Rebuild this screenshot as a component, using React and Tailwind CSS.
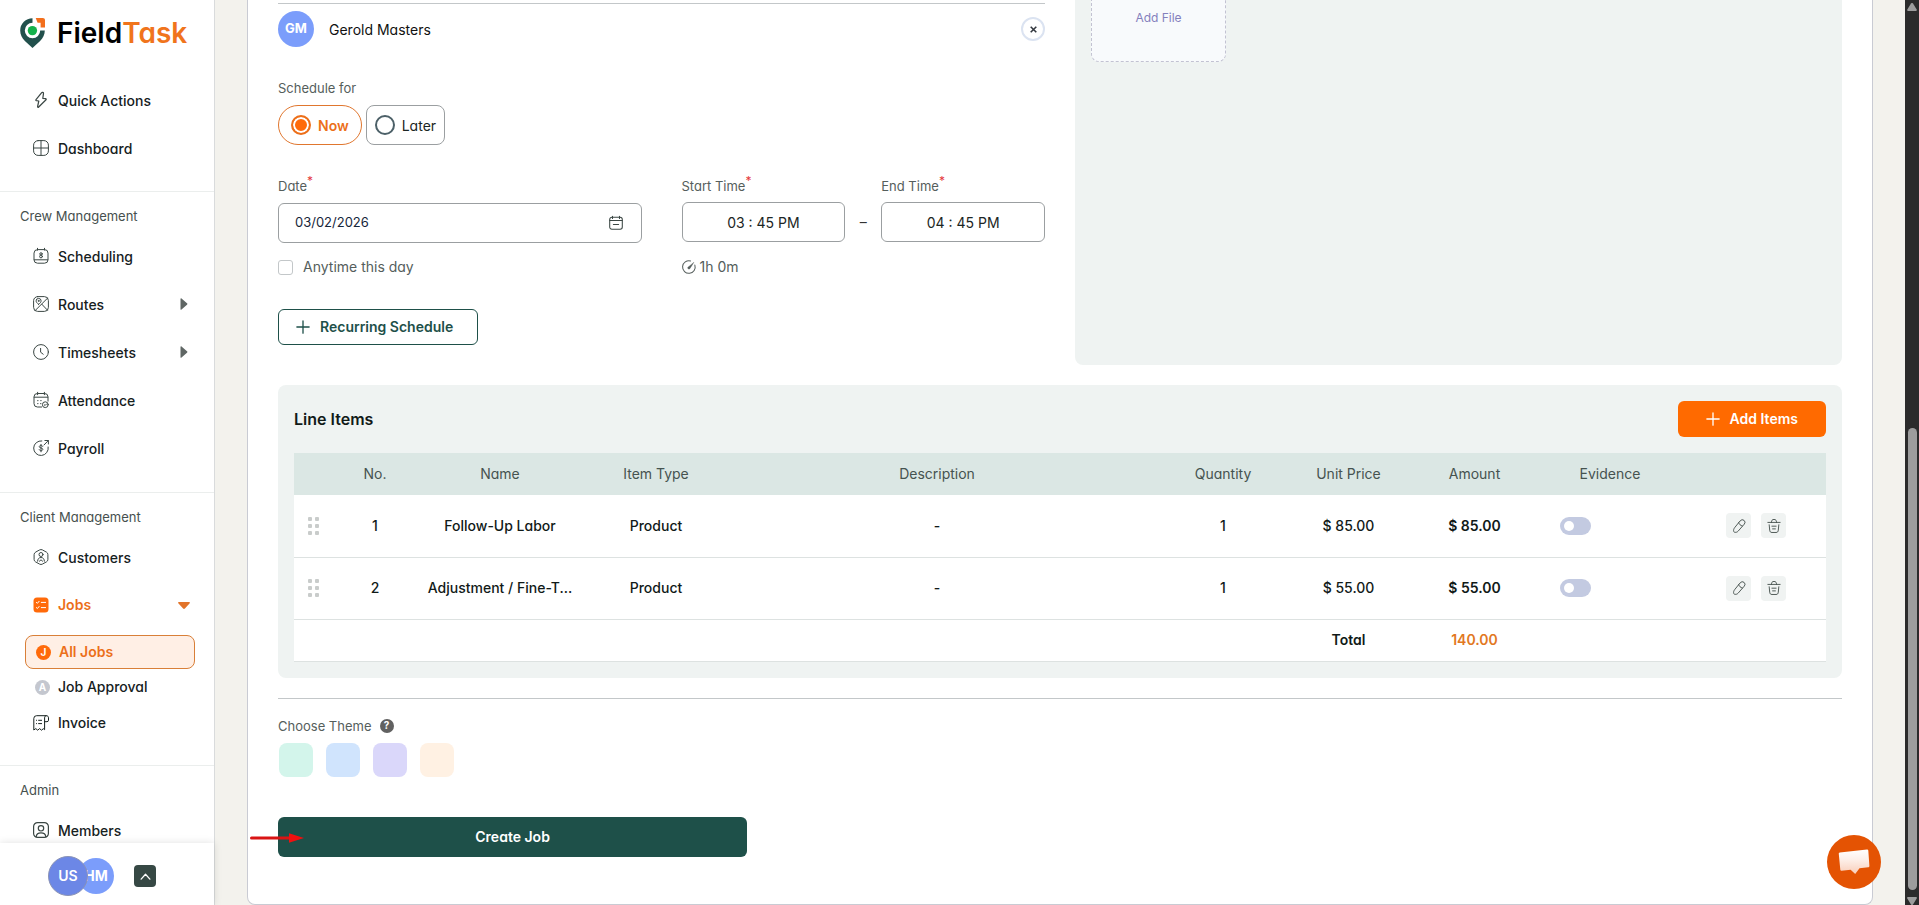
import React, { useState } from 'react';

const stroke = {
  fill: 'none',
  stroke: 'currentColor',
  strokeWidth: 1,
  strokeLinecap: 'round',
  strokeLinejoin: 'round',
};

function Icon({ children, className = 'size-4' }) {
  return (
    <svg viewBox="0 0 16 16" className={`${className} shrink-0 overflow-visible`} aria-hidden="true" {...stroke}>
      {children}
    </svg>
  );
}

const BoltIcon = () => (
  <Icon>
    <path d="M8.500.800 3 7.600c-.4.500-.2 1 .4 1.100l2.400.3-1.200 5.500c-.1.900.5 1.100 1.100.5L13 7.800c.4-.5.2-1-.4-1.100l-2.800-.3.700-5c.1-1-1.300-1.500-2-.6Z" strokeWidth="1.200" />
  </Icon>
);

const DashboardIcon = () => (
  <Icon>
    <rect x=".6" y=".6" width="14.800" height="14.800" rx="4.500" />
    <path d="M8 .6v14.800M.6 8h14.800" />
  </Icon>
);

const ScheduleIcon = () => (
  <Icon>
    <rect x="1" y="1.600" width="14" height="13.600" rx="3.500" />
    <path d="M4.500.3v1.800M11.500.3v1.800M1.200 11.800h13.600" />
    <circle cx="8" cy="5.900" r="1.200" />
    <circle cx="8" cy="8.500" r="1.400" />
  </Icon>
);

const RoutesIcon = () => (
  <Icon>
    <rect x=".6" y=".6" width="14.800" height="14.800" rx="4" />
    <path d="M14.500 2.200 2.200 14.500M8.800 8.200l5.600 5.900" />
    <path d="M5.600 8.300C4 7.100 3.100 6.100 3.100 4.900a2.500 2.500 0 0 1 5 0c0 1.200-.9 2.200-2.500 3.400Z" />
    <circle cx="5.600" cy="4.900" r=".5" />
  </Icon>
);

const ClockIcon = () => (
  <Icon>
    <circle cx="8" cy="8" r="7.400" />
    <path d="M7.600 4.400v3.800l2.600 2" />
  </Icon>
);

const AttendanceIcon = () => (
  <Icon>
    <path d="M8.600 15H4.400A3.400 3.400 0 0 1 1 11.600V4.900a3.400 3.400 0 0 1 3.400-3.400h7.200A3.400 3.400 0 0 1 15 4.900v4.200M4.600.3v2.400M11.400.3v2.400M1.200 5.200h13.600" />
    <path d="M4.800 8.600h.1M7.900 8.600H8M4.800 11.600h.1M7.700 11.600h.1" strokeWidth="1.300" />
    <circle cx="12.300" cy="12.700" r="2.900" />
    <path d="m11.200 12.700.9.800 1.400-1.500" />
  </Icon>
);

const PayrollIcon = () => (
  <Icon>
    <path d="M8.800.9A7.300 7.300 0 1 0 15.200 7M11 5l4.300-4.400M11.900.5h3.500V4" />
    <path d="M9.700 6.300C9.500 5.700 8.800 5.400 8 5.400c-1 0-1.700.5-1.700 1.300C6.300 8.500 9.800 7.500 9.800 9.300c0 .8-.8 1.400-1.800 1.400-.9 0-1.600-.4-1.800-1.100M8 4.400v7.400" />
  </Icon>
);

const CustomersIcon = () => (
  <Icon>
    <path d="M6.600.9a2.800 2.800 0 0 1 2.800 0l4 2.200a2.800 2.800 0 0 1 1.500 2.500v4.800a2.800 2.800 0 0 1-1.500 2.500l-4 2.200a2.800 2.800 0 0 1-2.800 0l-4-2.200a2.800 2.800 0 0 1-1.500-2.500V5.600a2.800 2.800 0 0 1 1.500-2.500Z" />
    <circle cx="8" cy="5.500" r="2" />
    <path d="M4.600 12.200c0-2.300 1.400-3.700 3.400-3.700s3.400 1.400 3.400 3.700M6.400 12.200l1.600-1.400 1.600 1.400" />
  </Icon>
);

const JobsIcon = () => (
  <Icon>
    <rect x=".5" y=".5" width="15" height="15" rx="3.500" fill="#ff6a0a" stroke="none" />
    <path d="m3.400 5.400 1 .9 1.700-2M3.400 10.600l1 .9 1.700-2M8.300 5.400h4.300M8.300 10.600h4.300" stroke="#fff" />
  </Icon>
);

const InvoiceIcon = () => (
  <Icon>
    <path d="M13.200.7H3.600A2.800 2.800 0 0 0 .8 3.500V15l2-1.400 1.900 1.600 1.900-1.600 1.900 1.600 1.800-1.500 1.300 1V2.800c0-1.300.7-2.100 1.900-2.100 1.200 0 2 .9 2 2.100v2.400c0 1-.6 1.500-1.500 1.500h-2.400" />
    <path d="M3.400 5.300h.1M5.600 5.300h3M3.400 8.600h.1M5.600 8.600h3" />
  </Icon>
);

const MembersIcon = () => (
  <Icon>
    <rect x=".6" y=".6" width="14.800" height="14.800" rx="4" strokeWidth="1.200" />
    <circle cx="8" cy="6.300" r="2.700" strokeWidth="1.200" />
    <path d="M3.300 14.500c.2-2.400 2.100-3.600 4.700-3.600s4.500 1.200 4.700 3.600" strokeWidth="1.200" />
  </Icon>
);

const CalendarIcon = () => (
  <Icon className="size-[14px]">
    <rect x=".8" y="1.500" width="14.400" height="13.700" rx="2.500" strokeWidth="1.200" />
    <path d="M4 .2v2.600M12 .2v2.600M.9 5.200h14.200M5 9.700h6" strokeWidth="1.200" />
  </Icon>
);

const DurationIcon = () => (
  <Icon className="size-[14px]">
    <path d="M9.800 1.100a7.200 7.200 0 1 0 4.900 4.700" strokeWidth="1.200" />
    <path d="m13.300 3-4 6.300a1.400 1.400 0 1 1-1.800-1.700Z" fill="currentColor" strokeWidth=".5" />
  </Icon>
);

const PencilIcon = () => (
  <Icon className="size-[14px]">
    <path d="M9.500 1.900a3 3 0 0 1 4.600 3.900L7 13.900c-1 1.100-2.300 1.500-3.700 1.300-1.200-.2-1.600-1-1.500-2.100.1-1.300.4-2.200 1.300-3.300Z" />
    <path d="M7.700 4.200c.6 2 1.900 3.200 4 3.700" />
  </Icon>
);

const TrashIcon = () => (
  <Icon className="size-[14px]">
    <path d="M1 3.900h14M5.100 3.700c0-2 .7-3.200 2.900-3.200s2.900 1.200 2.900 3.200M2.500 6.600l.6 6.200c.2 1.800.9 2.600 2.600 2.600h4.600c1.700 0 2.400-.8 2.600-2.600l.6-6.200M5.600 8.200h4.800M6.400 11.300h3.200" />
  </Icon>
);

const PlusIcon = () => (
  <Icon className="size-[14px]">
    <path d="M8 1v14M1 8h14" strokeWidth="1.500" />
  </Icon>
);

const CREW_ITEMS = [
  { label: 'Scheduling', icon: <ScheduleIcon /> },
  { label: 'Routes', icon: <RoutesIcon />, arrow: true },
  { label: 'Timesheets', icon: <ClockIcon />, arrow: true },
  { label: 'Attendance', icon: <AttendanceIcon /> },
  { label: 'Payroll', icon: <PayrollIcon /> },
];

const LINE_ITEMS = [
  { no: 1, name: 'Follow-Up Labor', type: 'Product', qty: 1, price: '$ 85.00' },
  { no: 2, name: 'Adjustment / Fine-T...', type: 'Product', qty: 1, price: '$ 55.00' },
];

const THEMES = [
  { name: 'Green', color: 'bg-[#d3f5eb]' },
  { name: 'Blue', color: 'bg-[#d0e4fd]' },
  { name: 'Purple', color: 'bg-[#dad7fa]' },
  { name: 'Peach', color: 'bg-[#fff1e3]' },
];

function NavItem({ label, icon, arrow }) {
  return (
    <a href="#" className="flex h-12 items-center gap-[9px] pl-[33px] pr-[26px] text-sm font-medium text-[#16211e]">
      <span className="text-[#3b4744]">{icon}</span>
      <span className="flex-1 pt-0.5">{label}</span>
      {arrow && (
        <svg viewBox="0 0 8 12" className="h-3 w-2" fill="#5f6664" aria-hidden="true">
          <path d="M.5.8v10.400c0 .6.600.8 1 .4L7 6.700c.5-.4.5-1 0-1.400L1.500.4C1.100 0 .5.200.5.800Z" />
        </svg>
      )}
    </a>
  );
}

function SectionTitle({ children }) {
  return <h2 className="mb-1.5 pl-5 text-[13px] leading-5 text-[#46504e]">{children}</h2>;
}

function Logo() {
  return (
    <a href="#" className="flex items-center gap-3 pl-5 pt-[15px]">
      <svg viewBox="0 0 25 30" className="h-[30px] w-[25px]" aria-hidden="true">
        <path
          d="M12.500.2A12.300 12.300 0 0 0 .2 12.500c0 4.200 1.900 7.700 4.700 10.500l7.600 7 7.600-7c2.800-2.800 4.700-6.200 4.700-10.500h-4.600a7.700 7.700 0 1 1-7.700-7.700Z"
          fill="#22504c"
        />
        <path d="M15.700 0h7.100c1.300 0 2.200.9 2.200 2.200v7.300h-4.400V4.700h-3Z" fill="#f36f1c" />
        <circle cx="12.400" cy="12.600" r="4.700" fill="#14b14b" />
      </svg>
      <span className="text-[28px] font-semibold leading-9 text-black">
        Field<span className="text-[#f0741c]">Task</span>
      </span>
    </a>
  );
}

function Sidebar() {
  return (
    <aside className="flex w-[215px] shrink-0 flex-col border-r border-[#d9dbdc] bg-white">
      <nav className="min-h-0 flex-1 overflow-hidden">
        <div className="h-[76px]">
          <Logo />
        </div>
        <div className="border-b border-[#ebeeed] pb-[19px]">
          <NavItem label="Quick Actions" icon={<BoltIcon />} />
          <NavItem label="Dashboard" icon={<DashboardIcon />} />
        </div>

        <div className="border-b border-[#ebeeed] pb-5 pt-[14px]">
          <SectionTitle>Crew Management</SectionTitle>
          {CREW_ITEMS.map(item => <NavItem key={item.label} {...item} />)}
        </div>

        <div className="border-b border-[#ebeeed] pb-6 pt-[14px]">
          <SectionTitle>Client Management</SectionTitle>
          <NavItem label="Customers" icon={<CustomersIcon />} />
          <a href="#" className="flex h-12 items-center gap-[9px] pl-[33px] pr-6 text-sm font-semibold text-[#ec6f1a]">
            <JobsIcon />
            <span className="flex-1">Jobs</span>
            <svg viewBox="0 0 12 7" className="h-[7px] w-3" fill="#e2742a" aria-hidden="true">
              <path d="M.9 0h10.200c.8 0 1.100.8.600 1.300L6.900 6.500c-.5.600-1.300.6-1.800 0L.3 1.300C-.2.800.1 0 .9 0Z" />
            </svg>
          </a>
          <a
            href="#"
            className="ml-[25px] mr-[19px] mt-1.5 flex h-[34px] items-center gap-2 rounded-lg border border-[#d97f38] bg-[#ffefe5] pl-2.5 text-sm font-semibold text-[#ec6f1a]"
          >
            <span className="flex size-[15px] items-center justify-center rounded-full bg-[#ff6a0a] text-[10px] font-bold text-white">J</span>
            All Jobs
          </a>
          <a href="#" className="flex h-9 items-center gap-2 pl-[35px] text-sm font-medium text-[#16211e]">
            <span className="flex size-[15px] items-center justify-center rounded-full bg-[#c4c7cf] text-[10px] font-bold text-white">A</span>
            Job Approval
          </a>
          <a href="#" className="flex h-9 items-center gap-[9px] pl-[33px] text-sm font-medium text-[#16211e]">
            <InvoiceIcon />
            Invoice
          </a>
        </div>

        <div className="pt-[14px]">
          <SectionTitle>Admin</SectionTitle>
          <NavItem label="Members" icon={<MembersIcon />} />
        </div>
      </nav>

      <div className="z-10 flex h-[62px] items-center bg-white pl-12 pt-1 shadow-[0_0_8px_rgba(0,0,0,0.12)]">
        <span className="z-10 flex size-10 items-center justify-center rounded-full border border-[#8b93b5] bg-[#6c87e6] text-sm font-semibold text-white">US</span>
        <span className="-ml-2.5 flex size-9 items-center justify-center rounded-full bg-[#7b9dfb] text-sm font-bold text-white">HM</span>
        <button type="button" aria-label="Expand" className="ml-5 flex size-[22px] items-center justify-center rounded bg-[#364844] text-white">
          <svg viewBox="0 0 12 8" className="h-[7px] w-[11px]" {...stroke} strokeWidth="1.500" aria-hidden="true">
            <path d="m1 7 5-5.500L11 7" />
          </svg>
        </button>
      </div>
    </aside>
  );
}

function Label({ children, required, htmlFor }) {
  return (
    <label htmlFor={htmlFor} className="block h-5 text-[13px] leading-5 text-[#555e5c]">
      {children}
      {required && <sup className="text-xs text-[#e5383b]">*</sup>}
    </label>
  );
}

function ScheduleForm() {
  const [when, setWhen] = useState('now');

  return (
    <div className="pt-[3px]">
      <div className="flex items-center border-t border-[#c3c7c9] pt-[7px]">
        <span className="flex size-9 items-center justify-center rounded-full bg-[#7b9dfb] text-[13px] font-bold text-white">GM</span>
        <span className="ml-[15px] flex-1 pt-0.5 text-sm text-[#111]">Gerold Masters</span>
        <button type="button" aria-label="Remove" className="flex size-6 items-center justify-center rounded-full border-2 border-[#dbe3f1] text-[#33383f]">
          <svg viewBox="0 0 8 8" className="size-[7px]" stroke="currentColor" strokeWidth="1.800" aria-hidden="true">
            <path d="m.8.8 6.400 6.400M7.200.8.800 7.200" />
          </svg>
        </button>
      </div>

      <fieldset className="mt-[31px]">
        <legend className="text-[13px] leading-5 text-[#555e5c]">Schedule for</legend>
        <div className="mt-[7px] flex gap-1">
          <label className="flex h-10 items-center gap-[7px] rounded-full border border-[#e0762e] px-3 text-sm font-semibold text-[#ec6f1a]">
            <input
              type="radio"
              name="when"
              checked={when === 'now'}
              onChange={() => setWhen('now')}
              className="size-5 appearance-none rounded-full border-2 border-[#4c6068] checked:border-[#ec6f1a] checked:bg-[#ff6a0a] checked:shadow-[inset_0_0_0_2px_#fff]"
            />
            <span className="pt-0.5">Now</span>
          </label>
          <label className="flex h-10 items-center gap-[7px] rounded-lg border border-[#9b9fa1] px-2 text-sm text-[#1c2624]">
            <input
              type="radio"
              name="when"
              checked={when === 'later'}
              onChange={() => setWhen('later')}
              className="size-5 appearance-none rounded-full border-2 border-[#4c6068] checked:border-[#ec6f1a] checked:bg-[#ff6a0a] checked:shadow-[inset_0_0_0_2px_#fff]"
            />
            <span className="pt-0.5">Later</span>
          </label>
        </div>
      </fieldset>

      <div className="mt-[31px] grid grid-cols-2 gap-10">
        <div>
          <Label htmlFor="date" required>Date</Label>
          <div className="mt-[7px] flex h-10 items-center rounded-md border border-[#9b9fa1] pl-4 pr-[18px] text-[#3b4744]">
            <input id="date" type="text" defaultValue="03/02/2026" className="min-w-0 flex-1 text-[13px] text-[#16263a] outline-none" />
            <CalendarIcon />
          </div>
          <label className="mt-[14px] flex items-center gap-2.5 text-sm leading-5 text-[#555e5c]">
            <input type="checkbox" className="size-[15px] appearance-none rounded-[3px] border border-[#c3c7c9]" />
            Anytime this day
          </label>
        </div>
        <div>
          <div className="flex">
            <div className="min-w-0 flex-1">
              <Label htmlFor="start" required>Start Time</Label>
              <input id="start" type="text" defaultValue="03 : 45 PM" className="mt-1.5 h-10 w-full rounded-md border border-[#9b9fa1] text-center text-sm text-[#1c2624]" />
            </div>
            <span className="flex w-9 items-end justify-center pb-2.5 text-sm leading-5 text-[#333]">–</span>
            <div className="min-w-0 flex-1">
              <Label htmlFor="end" required>End Time</Label>
              <input id="end" type="text" defaultValue="04 : 45 PM" className="mt-1.5 h-10 w-full rounded-md border border-[#9b9fa1] text-center text-sm text-[#1c2624]" />
            </div>
          </div>
          <p className="mt-[15px] flex items-center gap-1 text-sm leading-5 text-[#555e5c]">
            <DurationIcon />
            1h 0m
          </p>
        </div>
      </div>

      <button type="button" className="mt-8 flex h-9 items-center gap-2.5 rounded-md border border-[#1e5049] pl-[17px] pr-6 text-sm font-semibold text-[#1e5049]">
        <PlusIcon />
        Recurring Schedule
      </button>
    </div>
  );
}

function LineItems() {
  return (
    <section className="mt-5 rounded-lg bg-[#eff3f2] p-4">
      <div className="mb-4 flex h-9 items-center justify-between">
        <h2 className="text-base font-semibold text-[#111a18]">Line Items</h2>
        <button type="button" className="flex h-9 items-center gap-2.5 rounded-md bg-[#ff6a00] px-7 text-sm font-semibold text-white">
          <PlusIcon />
          Add Items
        </button>
      </div>
      <table className="w-full table-fixed bg-white text-center text-sm text-[#111a18]">
        <colgroup>
          <col className="w-10" />
          <col className="w-[82px]" />
          <col className="w-[168px]" />
          <col className="w-[144px]" />
          <col />
          <col className="w-[154px]" />
          <col className="w-[97px]" />
          <col className="w-[155px]" />
          <col className="w-[116px]" />
          <col className="w-[158px]" />
        </colgroup>
        <thead>
          <tr className="h-[42px] bg-[#dbe7e4] text-[#465350]">
            <th></th>
            <th className="font-normal">No.</th>
            <th className="font-normal">Name</th>
            <th className="font-normal">Item Type</th>
            <th className="font-normal">Description</th>
            <th className="font-normal">Quantity</th>
            <th className="font-normal">Unit Price</th>
            <th className="font-normal">Amount</th>
            <th className="font-normal">Evidence</th>
            <th></th>
          </tr>
        </thead>
        <tbody>
          {LINE_ITEMS.map(item => (
            <tr key={item.no} className="h-[62px] border-b border-[#dde2e1] font-medium">
              <td className="pl-[14px]">
                <svg viewBox="0 0 11 18" className="h-[18px] w-[11px]" fill="#c9cccb" aria-hidden="true">
                  {[0, 7, 14].map(y => (
                    <g key={y}>
                      <rect x="0" y={y} width="4" height="4" rx="1" />
                      <rect x="7" y={y} width="4" height="4" rx="1" />
                    </g>
                  ))}
                </svg>
              </td>
              <td>{item.no}</td>
              <td className="whitespace-nowrap">{item.name}</td>
              <td>{item.type}</td>
              <td>-</td>
              <td>{item.qty}</td>
              <td>{item.price}</td>
              <td className="font-semibold">{item.price}</td>
              <td className="pl-2">
                <button type="button" role="switch" aria-checked="false" aria-label={`Evidence ${item.no}`} className="flex h-[18px] w-[31px] items-center rounded-full bg-[#c3cae1] pl-1">
                  <span className="size-2.5 rounded-full bg-white" />
                </button>
              </td>
              <td className="pl-[58px]">
                <div className="flex gap-2.5">
                  <button type="button" aria-label="Edit" className="flex size-[25px] items-center justify-center rounded bg-[#f0f3f2] text-[#3b4744]">
                    <PencilIcon />
                  </button>
                  <button type="button" aria-label="Delete" className="flex size-[25px] items-center justify-center rounded bg-[#f0f3f2] text-[#3b4744]">
                    <TrashIcon />
                  </button>
                </div>
              </td>
            </tr>
          ))}
        </tbody>
        <tfoot>
          <tr className="h-[42px] border-b border-[#dde2e1] font-semibold">
            <td colSpan={6}></td>
            <td>Total</td>
            <td className="text-[#e2781f]">140.00</td>
            <td colSpan={2}></td>
          </tr>
        </tfoot>
      </table>
    </section>
  );
}

export default function App() {
  return (
    <div className="flex h-screen overflow-hidden bg-[#f3f2ed] font-[Inter,'Liberation_Sans',sans-serif] [font-feature-settings:'cv11']">
      <Sidebar />

      <main className="min-w-0 flex-1 px-8">
        <div className="h-full rounded-b-lg border-x border-b border-[#c9cbd3] bg-white px-[30px]">
          <div className="grid grid-cols-2 gap-[30px]">
            <ScheduleForm />
            <div className="min-h-[365px] rounded-b-lg bg-[#eff3f2] px-4">
              <button type="button" className="flex h-[62px] w-[135px] items-start justify-center rounded-b-lg border border-t-0 border-dashed border-[#c2c2d2] bg-[#f8fafc] pt-2.5 text-xs text-[#8480bd]">
                Add File
              </button>
            </div>
          </div>

          <LineItems />

          <div className="mt-5 border-t border-[#c3c7c9] pt-[17px]">
            <div className="flex items-center gap-2">
              <span className="text-[13px] leading-5 text-[#555e5c]">Choose Theme</span>
              <span className="flex size-[14px] items-center justify-center rounded-full bg-[#616161] text-[10px] font-bold text-white">?</span>
            </div>
            <div className="mt-[7px] flex gap-[13px] pl-px">
              {THEMES.map(t => (
                <button key={t.name} type="button" aria-label={t.name} className={`size-[34px] rounded-lg ${t.color}`} />
              ))}
            </div>
          </div>

          <div className="relative mt-10">
            <button type="button" className="h-10 w-[30%] rounded-md bg-[#1e5049] text-sm font-semibold text-white">
              Create Job
            </button>
            <svg viewBox="0 0 54 12" className="absolute -left-7 top-[15px] h-3 w-[54px]" aria-hidden="true">
              <path d="M1.500 6h42" stroke="#d91414" strokeWidth="3" strokeLinecap="round" />
              <path d="M39 1.200 54 6l-15 4.800Z" fill="#f01010" />
            </svg>
          </div>
        </div>
      </main>

      {/* scroll rail */}
      <div className="flex w-[14px] shrink-0 flex-col items-center bg-[#2b2b2b]">
        <svg viewBox="0 0 10 8" className="mt-[3px] h-2 w-2.5" fill="#9d9d9d" aria-hidden="true">
          <path d="M4 .6.300 6.500c-.4.700 0 1.500.8 1.500h7.800c.8 0 1.200-.8.8-1.500L6 .600a1.200 1.200 0 0 0-2 0Z" />
        </svg>
        <div className="min-h-0 flex-1" />
        <div className="h-[51%] w-[9px] rounded-full bg-[#9d9d9d]" />
        <svg viewBox="0 0 10 8" className="mt-[7px] h-2 w-2.5" fill="#9d9d9d" aria-hidden="true">
          <path d="M4 7.400.300 1.500C-.1.800.3 0 1.100 0h7.800c.8 0 1.200.8.8 1.500L6 7.400a1.200 1.200 0 0 1-2 0Z" />
        </svg>
      </div>

      <button type="button" aria-label="Open chat" className="fixed bottom-4 right-[38px] flex size-[54px] items-center justify-center rounded-full bg-[#e45303]">
        <svg viewBox="0 0 32 26" className="h-[26px] w-8" aria-hidden="true">
          <defs>
            <linearGradient id="chat" x1="0" y1="0" x2="0" y2="1">
              <stop offset="0" stopColor="#fff" />
              <stop offset=".4" stopColor="#fdf0ea" />
              <stop offset="1" stopColor="#f9cdb8" />
            </linearGradient>
          </defs>
          <path d="M1.800 3.600 29 .6c.7-.1 1.200.3 1.300 1L31.400 17c0 .7-.4 1.200-1.100 1.300l-8.800.9-4.300 5.900-4.600-4.300-9 .9c-.7.100-1.200-.3-1.300-1L.8 4.900c-.1-.7.300-1.200 1-1.300Z" fill="url(#chat)" />
        </svg>
      </button>
    </div>
  );
}
